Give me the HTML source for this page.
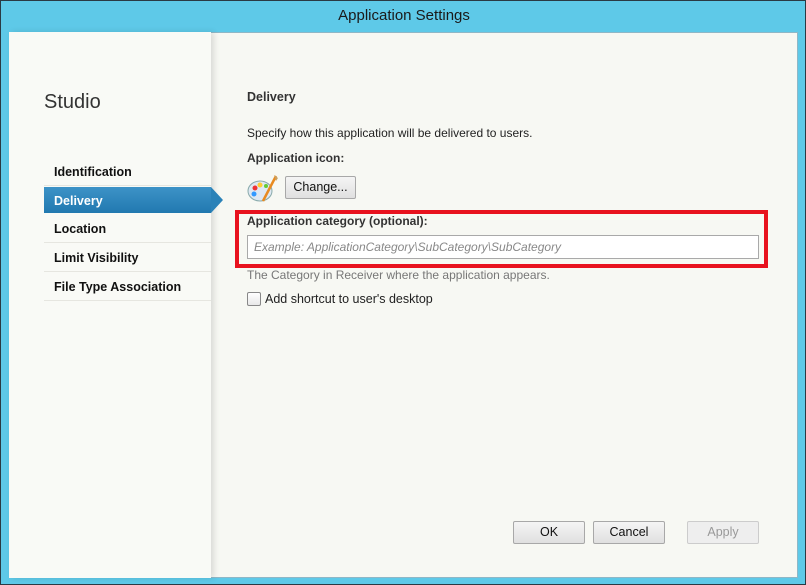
<!DOCTYPE html>
<html><head><style>
*{margin:0;padding:0;box-sizing:border-box}
body{width:806px;height:585px;background:#5ec9e8;font-family:"Liberation Sans",sans-serif;position:relative;overflow:hidden;border:1px solid #2a3a44}
.t{position:absolute}
#title{left:0;top:6px;width:806px;text-align:center;font-size:15px;color:#1a1a1a}
#main{left:8px;top:31px;width:789px;height:546px;background:#f7f8f3;border:1px solid #8fb7c6}
#left{left:8px;top:31px;width:202px;height:546px;background:#f9faf6;box-shadow:3px 0 6px rgba(0,0,0,0.12)}
.nav{position:absolute;left:43px;width:167px;height:29px;font-size:12.5px;font-weight:bold;color:#111;padding:8px 0 0 10px;border-bottom:1px solid #e6e6e0}
.sel{background:linear-gradient(#3d93c7,#2179b0);color:#fff;border:none}
.btn{position:absolute;height:23px;border:1px solid #a8a8a8;border-radius:2px;background:linear-gradient(#f5f5f5,#e0e0e0);font-size:12.5px;text-align:center;line-height:21px;color:#111}
</style></head><body>
<div class="t" id="title">Application Settings</div>
<div class="t" id="main"></div>
<div class="t" id="left"></div>
<div class="t" style="left:43px;top:90px;font-size:20px;color:#333">Studio</div>
<div class="nav" style="top:156px">Identification</div>
<div class="nav sel" style="top:186px;height:26px;padding-top:7px">Delivery</div>
<div class="t" style="left:210px;top:186px;width:0;height:0;border-top:13px solid transparent;border-bottom:13px solid transparent;border-left:12px solid #2a82b8"></div>
<div class="nav" style="top:213px">Location</div>
<div class="nav" style="top:242px">Limit Visibility</div>
<div class="nav" style="top:271px">File Type Association</div>

<div class="t" style="left:246px;top:89px;font-size:12.5px;font-weight:bold;color:#333">Delivery</div>
<div class="t" style="left:246px;top:125px;font-size:12px;color:#222">Specify how this application will be delivered to users.</div>
<div class="t" style="left:246px;top:150px;font-size:12px;font-weight:bold;color:#333">Application icon:</div>
<svg class="t" style="left:246px;top:172px" width="32" height="32" viewBox="0 0 32 32">
<ellipse cx="13" cy="18" rx="12" ry="10" fill="#dfe8f2" stroke="#8aa" stroke-width="1"/>
<circle cx="8" cy="15" r="2.5" fill="#e33"/><circle cx="13" cy="12" r="2.5" fill="#fc3"/><circle cx="7" cy="21" r="2.5" fill="#39f"/><circle cx="19" cy="13" r="2" fill="#6c3"/>
<path d="M29 3 L16 28" stroke="#e88a20" stroke-width="2.5"/><path d="M27 2 L31 5 L29 8 Z" fill="#c9a060"/>
</svg>
<div class="btn" style="left:284px;top:175px;width:71px">Change...</div>
<div class="t" style="left:234px;top:209px;width:533px;height:58px;border:4px solid #e8121e"></div>
<div class="t" style="left:246px;top:213px;font-size:12px;font-weight:bold;color:#333">Application category (optional):</div>
<div class="t" style="left:246px;top:234px;width:512px;height:24px;background:#fff;border:1px solid #a9a9a9;font-size:12px;font-style:italic;color:#888;padding:4px 0 0 6px">Example: ApplicationCategory\SubCategory\SubCategory</div>
<div class="t" style="left:246px;top:267px;font-size:12px;color:#777">The Category in Receiver where the application appears.</div>
<div class="t" style="left:246px;top:291px;width:14px;height:14px;border:1px solid #888;background:linear-gradient(#fff,#e8e8e8);border-radius:2px"></div>
<div class="t" style="left:264px;top:291px;font-size:12.5px;color:#222">Add shortcut to user's desktop</div>
<div class="btn" style="left:512px;top:520px;width:72px">OK</div>
<div class="btn" style="left:592px;top:520px;width:72px">Cancel</div>
<div class="btn" style="left:686px;top:520px;width:72px;color:#999;border-color:#ccc;background:#eee">Apply</div>
</body></html>
